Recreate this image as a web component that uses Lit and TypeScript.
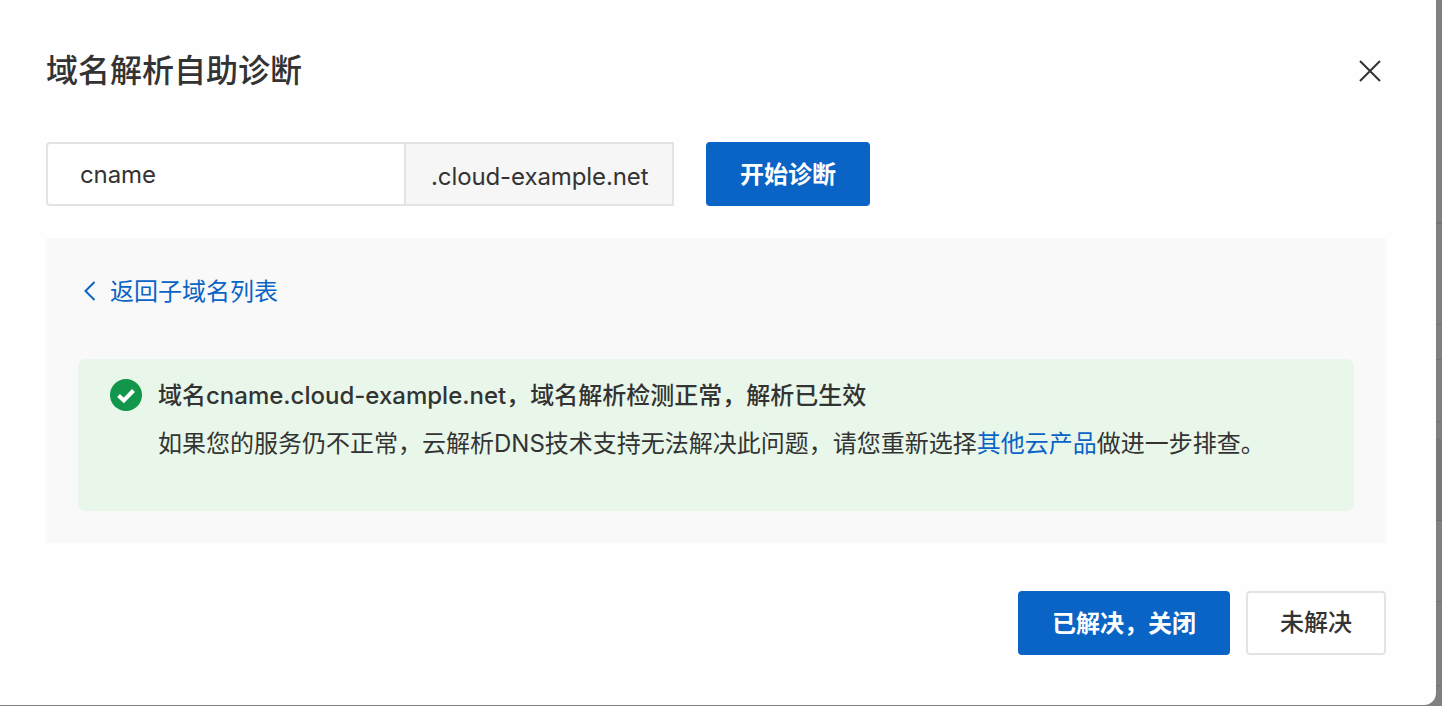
import { LitElement, html, css } from "lit";
import { customElement } from "lit/decorators.js";

@customElement("app-root")
export class AppRoot extends LitElement {
  static styles = css`
    :host {
      display: block;
      width: 1442px;
      height: 706px;
      background: linear-gradient(
        #808080 0 222px,
        #747474 222px 224px,
        #808080 224px 324px,
        #747474 324px 325px,
        #808080 325px 359px,
        #747474 359px 360px,
        #808080 360px 421px,
        #747474 421px 422px,
        #808080 422px 439px,
        #78787c 439px 520px,
        #6e6e6e 520px 521px,
        #808080 521px 601px,
        #747474 601px 602px,
        #808080 602px 685px,
        #747474 685px 686px,
        #808080 686px
      );
      overflow: hidden;
      font-family: Inter, "Noto Sans CJK SC", sans-serif;
      color: #333;
    }
    .modal {
      box-sizing: border-box;
      width: 1436px;
      height: 705px;
      background: #fefefe;
      border-bottom-right-radius: 12px;
      padding: 46px 50px 0 46px;
      display: flex;
      flex-direction: column;
    }
    .head {
      display: flex;
      justify-content: space-between;
      align-items: center;
      height: 50px;
    }
    .title {
      font-size: 32px;
      line-height: 50px;
      font-weight: 500;
    }
    .close {
      display: block;
      margin-right: 5px;
    }
    .search {
      display: flex;
      margin-top: 46px;
      height: 64px;
    }
    .input {
      box-sizing: border-box;
      width: 360px;
      border: 2px solid #e3e3e3;
      border-radius: 4px 0 0 4px;
      background: #fff;
      padding-left: 32px;
      font-size: 24px;
      line-height: 62px;
      letter-spacing: -0.1px;
      display: block;
    }
    .suffix {
      box-sizing: border-box;
      width: 268px;
      border: 2px solid #e3e3e3;
      border-left: 0;
      background: #f6f6f6;
      padding-left: 25px;
      font-size: 24px;
      line-height: 66px;
      letter-spacing: -0.1px;
      white-space: nowrap;
    }
    .btn {
      box-sizing: border-box;
      height: 64px;
      border-radius: 4px;
      font: inherit;
      font-size: 24px;
      font-weight: 500;
      line-height: 66px;
      display: flex;
      align-items: flex-start;
      justify-content: center;
      padding: 0;
    }
    .primary {
      background: #0a64c6;
      color: #fff;
      border: 0;
      font-weight: 700;
    }
    .start {
      width: 164px;
      margin-left: 32px;
    }
    .panel {
      margin-top: 32px;
      height: 305px;
      box-sizing: border-box;
      background: #f9f9f9;
      padding: 32px;
    }
    .back {
      display: flex;
      align-items: center;
      gap: 14px;
      height: 42px;
      color: #0a64c6;
      font-size: 24px;
      text-decoration: none;
      padding-left: 6px;
    }
    .back span {
      margin-top: -4px;
    }
    .alert {
      margin-top: 47px;
      height: 152px;
      box-sizing: border-box;
      background: #e8f7e9;
      border-radius: 8px;
      padding: 20px 32px;
      display: flex;
      gap: 16px;
    }
    .check {
      display: block;
      flex: none;
    }
    .msg {
      font-size: 24px;
      line-height: 48px;
      margin-top: -7px;
    }
    .msg-title {
      font-weight: 500;
    }
    .msg a {
      color: #0a64c6;
      text-decoration: none;
    }
    .foot {
      display: flex;
      justify-content: flex-end;
      gap: 16px;
      margin-top: 48px;
    }
    .resolved {
      width: 212px;
    }
    .unresolved {
      width: 140px;
      background: #fff;
      border: 2px solid #e3e3e3;
      color: #333;
      line-height: 60px;
    }
  `;

  render() {
    return html`
      <div class="modal">
        <div class="head">
          <div class="title">域名解析自助诊断</div>
          <svg class="close" width="22" height="22" viewBox="0 0 22 22" fill="none" stroke="#333" stroke-width="2">
            <path d="M1 1 21 21M21 1 1 21" />
          </svg>
        </div>
        <div class="search">
          <div class="input">cname</div>
          <div class="suffix">.cloud-example.net</div>
          <button class="btn primary start">开始诊断</button>
        </div>
        <div class="panel">
          <a class="back">
            <svg width="12" height="20" viewBox="0 0 12 20" fill="none" stroke="#0a64c6" stroke-width="2">
              <path d="M10.5 1 1.5 10l9 9" />
            </svg>
            <span>返回子域名列表</span>
          </a>
          <div class="alert">
            <svg class="check" width="32" height="32" viewBox="0 0 32 32">
              <circle cx="16" cy="16" r="16" fill="#12964b" />
              <path d="M8.5 16.5 13.8 21.5 23.5 11.5" fill="none" stroke="#fff" stroke-width="4" />
            </svg>
            <div class="msg">
              <div class="msg-title">域名cname.cloud-example.net&#xFF0C;域名解析检测正常&#xFF0C;解析已生效</div>
              <div>如果您的服务仍不正常&#xFF0C;云解析DNS技术支持无法解决此问题&#xFF0C;请您重新选择<a>其他云产品</a>做进一步排查。</div>
            </div>
          </div>
        </div>
        <div class="foot">
          <button class="btn primary resolved">已解决&#xFF0C;关闭</button>
          <button class="btn unresolved">未解决</button>
        </div>
      </div>
    `;
  }
}
